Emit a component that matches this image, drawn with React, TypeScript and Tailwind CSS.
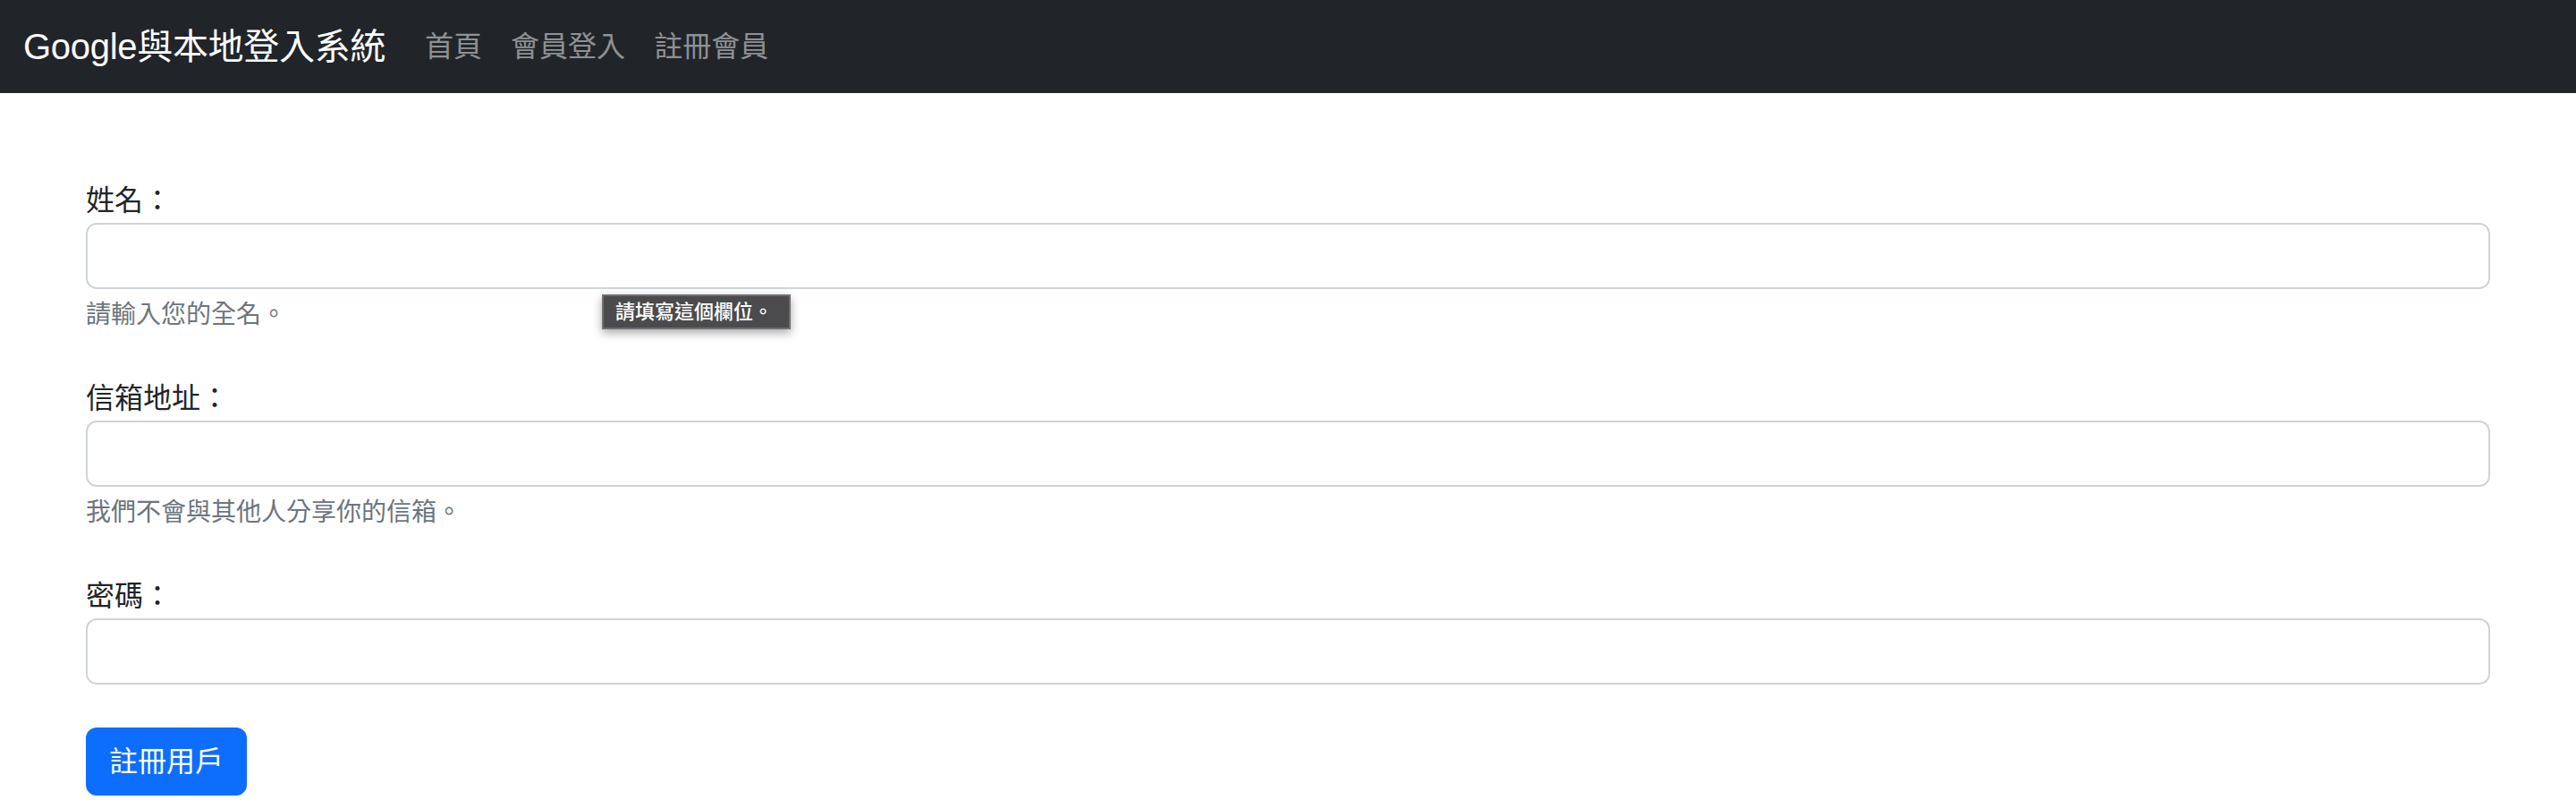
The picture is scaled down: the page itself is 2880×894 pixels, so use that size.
import React from 'react'

const font = "font-['Liberation_Sans','Noto_Sans_CJK_TC',sans-serif]"

function Field({ label, type, help }: { label: string; type: string; help?: string }) {
  return (
    <div className="mb-[48px]">
      <label className="block text-[32px] leading-[48px] text-[#212529]">{label}</label>
      <input
        type={type}
        className="block w-full h-[74px] mt-[1px] rounded-[12px] border-2 border-[#ced4da] bg-white px-[24px] text-[32px] outline-none"
      />
      {help && <div className="mt-[8px] text-[28px] leading-[42px] text-[#6c757d]">{help}</div>}
    </div>
  )
}

export default function App() {
  return (
    <div className={`min-h-screen bg-white ${font}`}>
      <nav className="h-[104px] bg-[#212529] flex items-center px-[26px]">
        <span className="text-[40px] leading-[60px] text-white tracking-[-0.3px] mr-[28px]">Google與本地登入系統</span>
        <div className="flex items-center">
          <a className="px-[16px] text-[32px] leading-[48px] text-[#8f9193]">首頁</a>
          <a className="px-[16px] text-[32px] leading-[48px] text-[#8f9193]">會員登入</a>
          <a className="px-[16px] text-[32px] leading-[48px] text-[#8f9193]">註冊會員</a>
        </div>
      </nav>

      <main className="px-[96px] pt-[96px]">
        <form className="relative">
          <Field label="姓名：" type="text" help="請輸入您的全名。" />
          <Field label="信箱地址：" type="email" help="我們不會與其他人分享你的信箱。" />
          <Field label="密碼：" type="password" />
          <button
            type="button"
            className="h-[76px] px-[24px] rounded-[12px] border-2 border-[#0d6efd] bg-[#0d6efd] text-white text-[32px] leading-[48px]"
          >
            註冊用戶
          </button>

          {/* browser validation bubble */}
          <div className="absolute left-[577px] top-[129px] h-[39px] flex items-center pl-[13px] pr-[18px] bg-[#4b4b4d] border-2 border-[#6f6f71] text-white text-[22px] font-medium shadow-[0_4px_10px_rgba(0,0,0,0.35)]">
            請填寫這個欄位。
          </div>
        </form>
      </main>
    </div>
  )
}
